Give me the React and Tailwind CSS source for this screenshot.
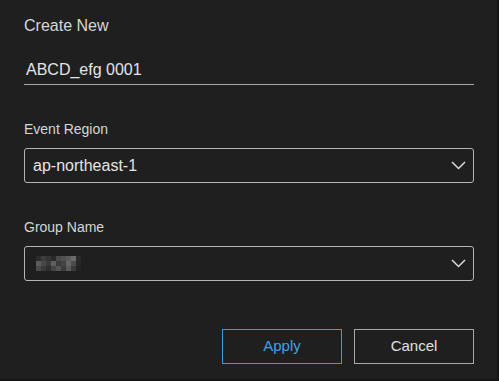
const mosaic = [
  ['#2c2c2c', '#3d3d3d', '#333333', '#2a2a2a', '#4a4a4a', '#505050', '#5a5a5a', '#6a6a6a', '#2a2a2a'],
  ['#5c5c5c', '#484848', '#3a3a3a', '#5e5e5e', '#3a3a3a', '#444444', '#666666', '#4c4c4c', '#262626'],
  ['#4a4a4a', '#3a3a3a', '#2e2e2e', '#454545', '#545454', '#3c3c3c', '#5a5a5a', '#3a3a3a', '#222222'],
];

function Select({ children }) {
  return (
    <div className="flex h-[35px] items-center justify-between rounded-[3px] border border-[#b4b4b4] pl-2 pr-[6px]">
      {children}
      <svg width="15" height="9" viewBox="0 0 15 9" className="mr-[1px]">
        <polyline points="1,1 7.5,7.5 14,1" fill="none" stroke="#dadada" strokeWidth="1.5" />
      </svg>
    </div>
  );
}

export default function App() {
  return (
    <div className="h-[381px] w-[499px] bg-[#141414] font-['Liberation_Sans',Arial,sans-serif]">
      <div className="h-[379px] w-[497px] bg-[#1f1f1f] pl-6 pr-[23px] pt-[17px] text-[#d6d6d6]">
        <div className="text-[16px] leading-[18px]">Create New</div>

        <div className="mt-[25px] border-b border-[#a8a8a8] pb-[4px] pl-[2px] text-[16px] leading-[20px] text-[#e4e4e4]">
          ABCD_efg 0001
        </div>

        <div className="mt-[36px] text-[14px] leading-[16px]">Event Region</div>
        <div className="mt-[11px]">
          <Select>
            <span className="text-[16px] text-[#e4e4e4]">ap-northeast-1</span>
          </Select>
        </div>

        <div className="mt-[36px] text-[14px] leading-[16px]">Group Name</div>
        <div className="mt-[11px]">
          <Select>
            <div className="ml-[3px] flex flex-col">
              {mosaic.map((row, i) => (
                <div key={i} className="flex">
                  {row.map((c, j) => (
                    <div key={j} className="h-[5px] w-[5px]" style={{ backgroundColor: c }} />
                  ))}
                </div>
              ))}
            </div>
          </Select>
        </div>

        <div className="mt-[48px] flex justify-end gap-3">
          <button className="h-[35px] w-[120px] border border-[#3a9ce0] text-[15px] text-[#3ea3e6]">
            Apply
          </button>
          <button className="h-[35px] w-[120px] border border-[#a8a8a8] text-[15px] text-[#e0e0e0]">
            Cancel
          </button>
        </div>
      </div>
    </div>
  );
}
